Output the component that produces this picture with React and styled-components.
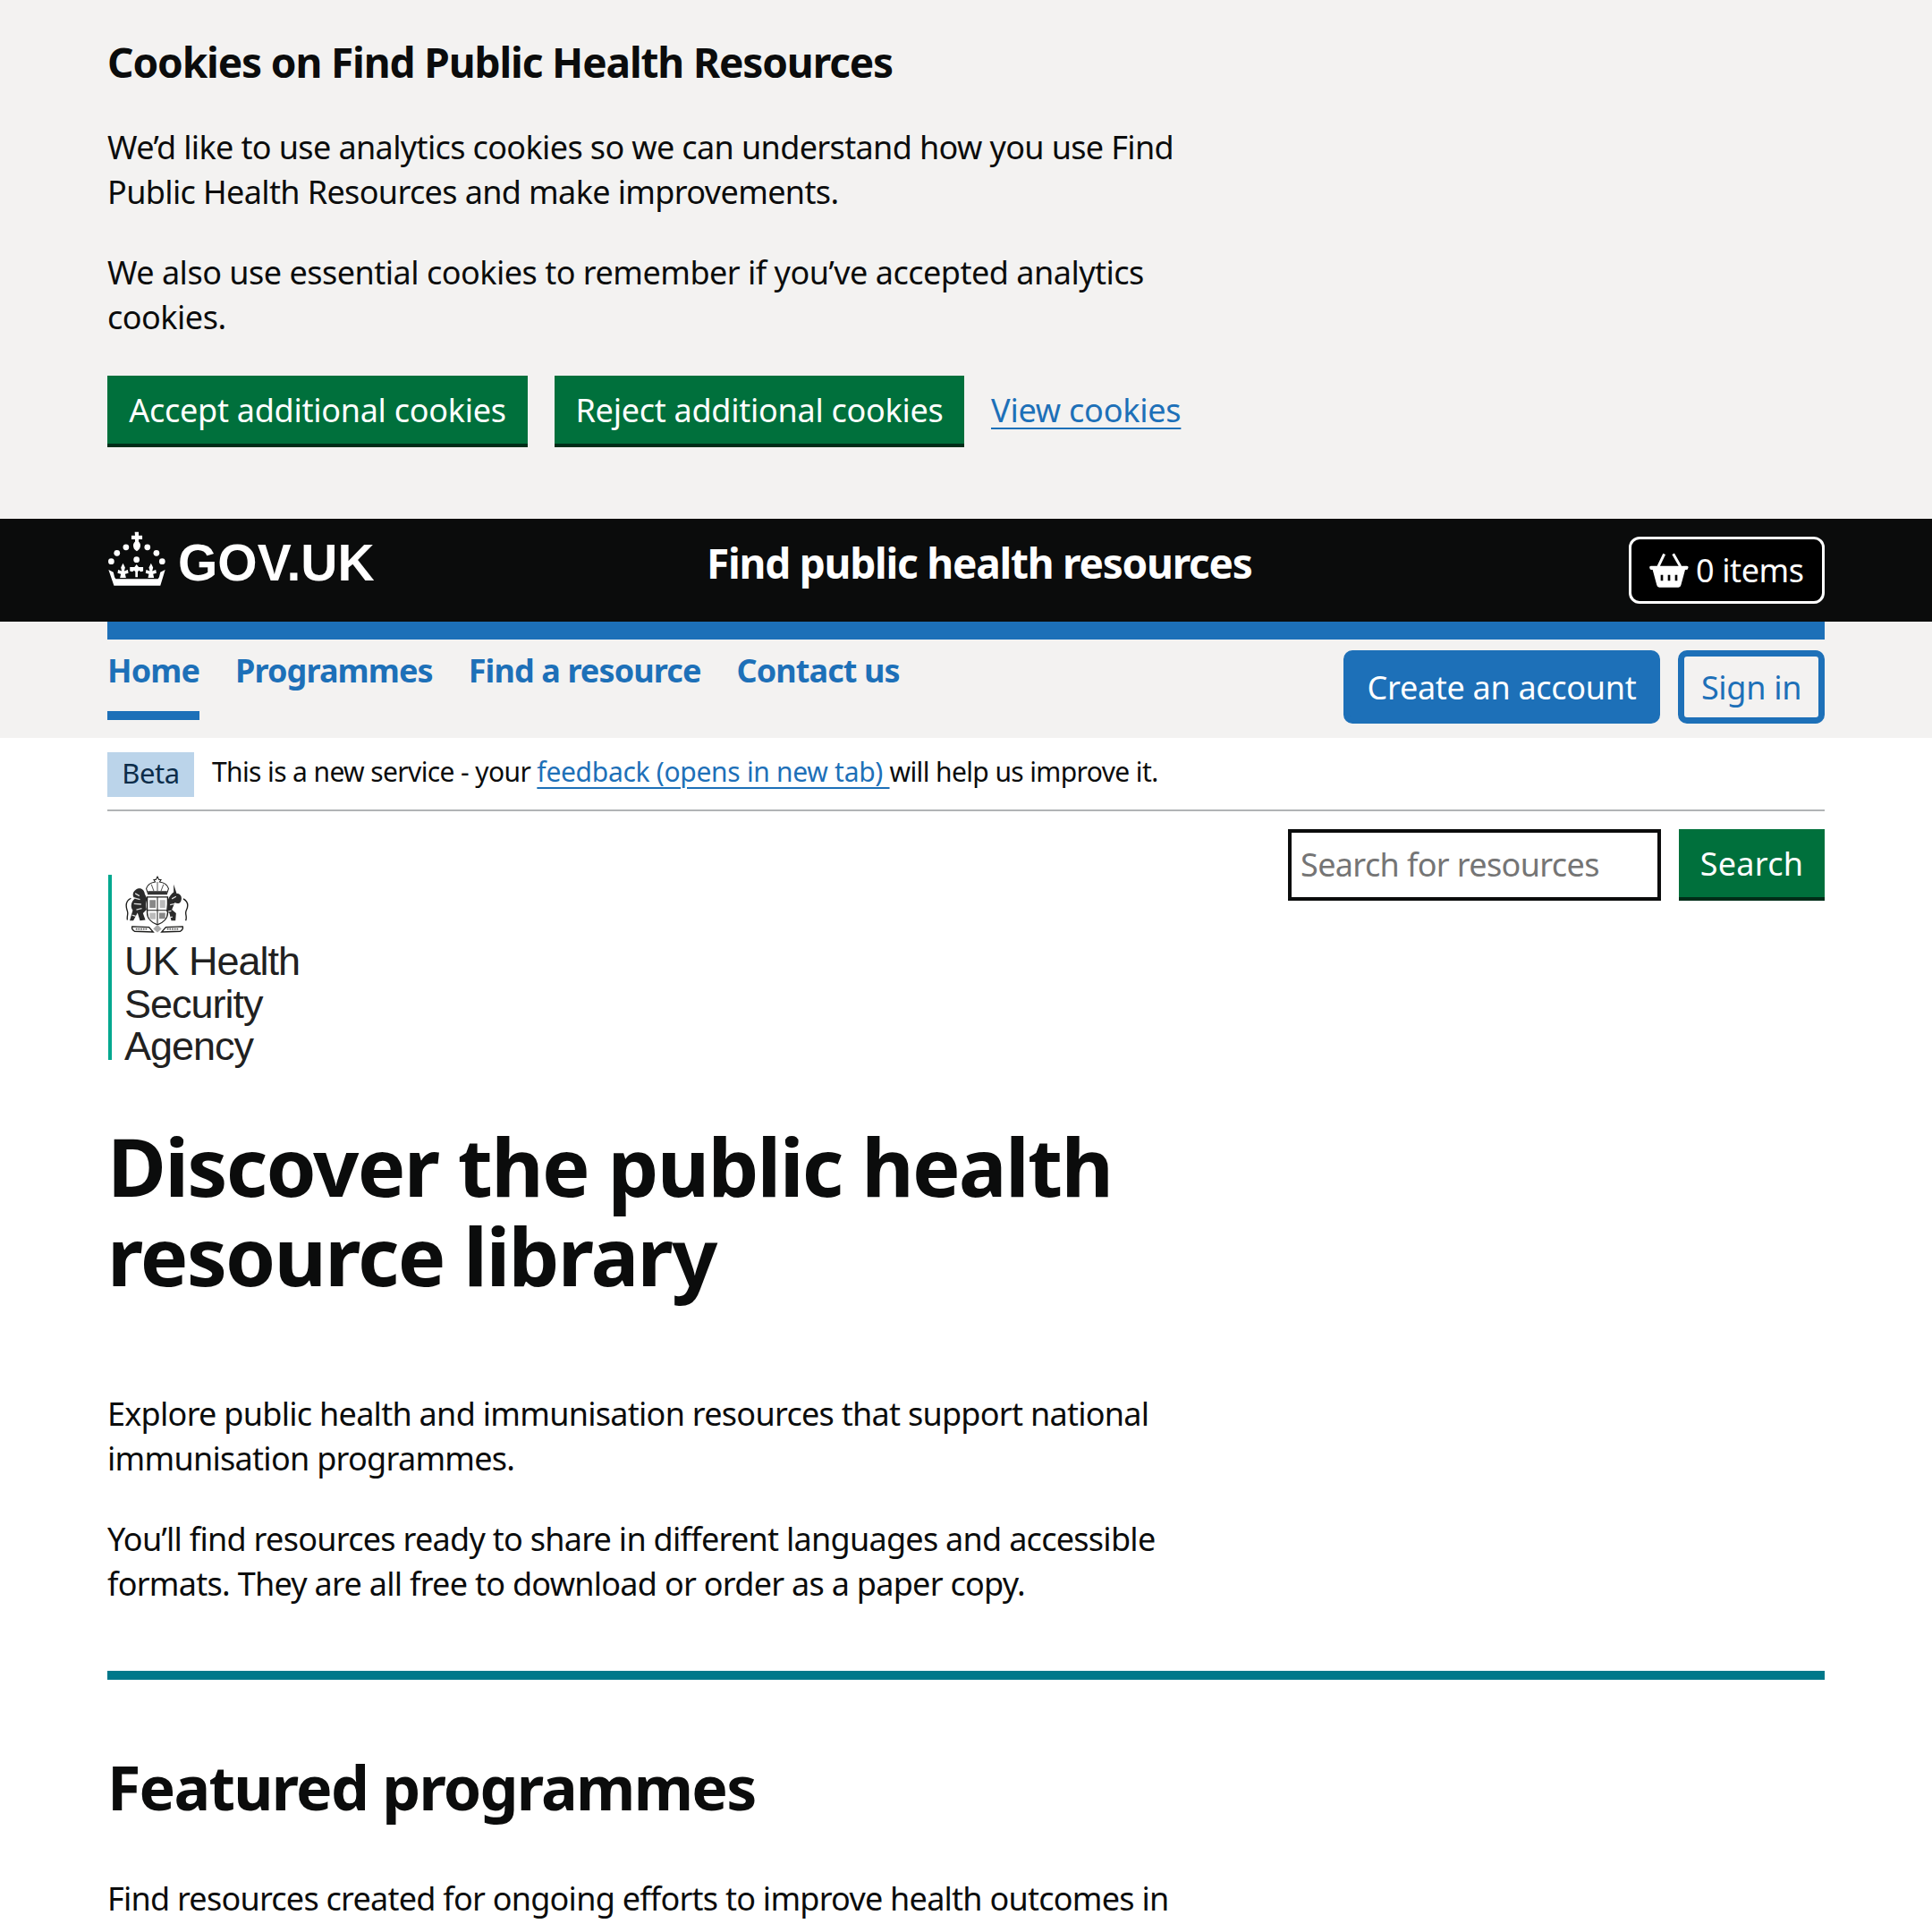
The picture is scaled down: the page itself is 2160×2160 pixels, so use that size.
import React from 'react';
import styled, { createGlobalStyle } from 'styled-components';

const GlobalStyle = createGlobalStyle`
  html, body {
    margin: 0;
    padding: 0;
    background: #fff;
    color: #0b0c0c;
    font-family: "Noto Sans", "Open Sans", sans-serif;
  }
  body {
    height: 2160px;
    overflow: hidden;
  }
  * {
    box-sizing: border-box;
  }
`;

const Container = styled.div`
  margin: 0 120px;
`;

const CookieBanner = styled.section`
  height: 580px;
  padding-top: 39px;
  background: #f3f2f1;
`;

const CookieTitle = styled.h2`
  margin: 0 0 41px;
  font-size: 46px;
  line-height: 60px;
  font-weight: 700;
  letter-spacing: -1.13px;
`;

const BodyText = styled.p`
  width: 1280px;
  margin: 0 0 40px;
  font-size: 36px;
  line-height: 50px;
  letter-spacing: ${(props) => props.$spacing ?? -0.63}px;
`;

const ButtonRow = styled.div`
  display: flex;
  align-items: flex-start;
  gap: 30px;
`;

const GreenButton = styled.button`
  width: ${(props) => props.$width}px;
  height: 76px;
  padding: 0;
  border: 0;
  background: #00703c;
  box-shadow: 0 4px 0 #002d18;
  color: #fff;
  font: inherit;
  font-size: 36px;
  letter-spacing: ${(props) => props.$spacing ?? -0.27}px;
`;

const Link = styled.a`
  color: #1d70b8;
  text-decoration: underline;
  text-decoration-thickness: 2px;
  text-underline-offset: 6px;
`;

const CookieLink = styled(Link)`
  font-size: 36px;
  line-height: 78px;
  letter-spacing: -0.22px;
`;

const Header = styled.header`
  display: grid;
  grid-template-columns: 670px 1fr auto;
  height: 115px;
  padding: 0 120px;
  background: #0b0c0c;
  color: #fff;
`;

const LogoLink = styled.div`
  display: flex;
  align-items: flex-start;
  gap: 13px;
  padding-top: 14px;
`;

const GovText = styled.span`
  margin-top: 2px;
  font-family: "Liberation Sans", Arial, sans-serif;
  font-size: 57px;
  line-height: 66px;
  font-weight: 700;
`;

const ServiceName = styled.div`
  padding-top: 19px;
  font-size: 46px;
  line-height: 60px;
  font-weight: 700;
  letter-spacing: -1.24px;
`;

const Basket = styled.div`
  display: flex;
  align-items: center;
  gap: 8px;
  width: 219px;
  height: 75px;
  margin-top: 20px;
  padding-left: 20px;
  border: 3px solid #fff;
  border-radius: 12px;
  background: #000;
  font-size: 36px;
  letter-spacing: -0.4px;
`;

const NavBand = styled.div`
  height: 130px;
  background: #f3f2f1;
`;

const NavInner = styled(Container)`
  display: flex;
  justify-content: space-between;
  height: 130px;
  border-top: 20px solid #1d70b8;
`;

const NavList = styled.nav`
  display: flex;
  gap: 40px;
`;

const NavItem = styled.a`
  height: 90px;
  padding-top: 10px;
  border-bottom: 10px solid ${(props) => (props.$active ? '#1d70b8' : 'transparent')};
  color: #1d70b8;
  font-size: 36px;
  line-height: 50px;
  font-weight: 700;
  letter-spacing: -0.9px;
`;

const AuthButtons = styled.div`
  display: flex;
  gap: 20px;
  margin-top: 12px;
`;

const AuthButton = styled.a`
  display: flex;
  align-items: center;
  justify-content: center;
  width: ${(props) => props.$width}px;
  height: 82px;
  border: 7px solid #1d70b8;
  border-radius: 10px;
  background: ${(props) => (props.$filled ? '#1d70b8' : 'transparent')};
  color: ${(props) => (props.$filled ? '#fff' : '#1d70b8')};
  font-size: 36px;
  letter-spacing: -0.3px;
`;

const PhaseBanner = styled.div`
  display: flex;
  align-items: flex-start;
  gap: 20px;
  height: 82px;
  padding-top: 16px;
  border-bottom: 2px solid #b1b4b6;
  font-size: 30px;
  line-height: 44px;
  letter-spacing: -0.62px;
`;

const Tag = styled.strong`
  width: 97px;
  height: 50px;
  background: #bbd4ea;
  color: #0c2d4a;
  font-size: 31px;
  font-weight: 400;
  line-height: 47px;
  letter-spacing: -0.4px;
  text-align: center;
`;

const PhaseLink = styled(Link)`
  letter-spacing: -0.3px;
`;

const SearchForm = styled.form`
  display: flex;
  justify-content: flex-end;
  gap: 20px;
  margin: 20px 0 -29px;
`;

const SearchInput = styled.input`
  width: 417px;
  height: 80px;
  padding: 0 10px 2px;
  border: 4px solid #0b0c0c;
  border-radius: 0;
  font: inherit;
  font-size: 36px;
  letter-spacing: -0.63px;
  &::placeholder {
    color: #757575;
    opacity: 1;
  }
`;

const OrgLogo = styled.div`
  height: 207px;
  margin-left: 1px;
  padding-left: 14px;
  border-left: 4px solid #00a88f;
`;

const OrgName = styled.div`
  margin-top: 2px;
  font-family: "Liberation Sans", Arial, sans-serif;
  font-size: 45px;
  line-height: 47.5px;
  letter-spacing: -1px;
  color: #212121;
`;

const PageTitle = styled.h1`
  width: 1280px;
  margin: 68px 0 103px;
  font-size: 90px;
  line-height: 100px;
  font-weight: 700;
  letter-spacing: -1.75px;
`;

const Rule = styled.hr`
  height: 10px;
  margin: 72px 0 80px;
  border: 0;
  background: #00788a;
`;

const SectionTitle = styled.h2`
  margin: 0 0 60px;
  font-size: 68px;
  line-height: 80px;
  font-weight: 700;
  letter-spacing: -1.72px;
`;

const CrownIcon = () => (
  <svg width="66" height="62" viewBox="58 40 196 184" fill="#fff" aria-hidden="true">
    <path d="M149 42h13v12h12v13h-12v7c6 5 7 12 5 19-2 6-5 10-11 13-6-3-10-7-11-13-2-7-1-14 5-19v-7h-12V54h12z" />
    <circle cx="120" cy="93" r="10" />
    <circle cx="191" cy="93" r="10" />
    <circle cx="90" cy="112" r="10" />
    <circle cx="221" cy="112" r="10" />
    <circle cx="71" cy="140" r="10" />
    <circle cx="240" cy="140" r="10" />
    <circle cx="155" cy="134" r="10" />
    <path d="M110 146l7 14-3 12 12-4 2 11-11 3 3 12h-20l3-12-11-3 2-11 12 4-3-12z" />
    <path d="M155 150l7 9h15v13l-8 2-6-4-4 4v18h-8v-18l-4-4-6 4-8-2v-13h15z" />
    <path d="M203 146l7 14-3 12 12-4 2 11-11 3 3 12h-20l3-12-11-3 2-11 12 4-3-12z" />
    <path d="M62 168l16 8 4 16 4 6h140l4-6 4-16 16-8-16 52H80z" />
  </svg>
);

const BasketIcon = () => (
  <svg width="44" height="40" viewBox="190 86 132 116" aria-hidden="true">
    <path d="M240 88l-20 42M270 88l24 42" stroke="#fff" strokeWidth="9" fill="none" />
    <path d="M196 128h120a5 5 0 0 1 4 7 6 6 0 0 1-6 6h-4l-14 52a9 9 0 0 1-9 7h-63a9 9 0 0 1-9-7l-14-52h-4a6 6 0 0 1-6-6 5 5 0 0 1 5-7z" fill="#fff" />
    <path d="M232 158v20M256 158v20M280 158v20" stroke="#000" strokeWidth="8" />
  </svg>
);

const Crest = () => (
  <svg width="74" height="66" viewBox="90 50 220 196" aria-hidden="true">
    <path d="M200 56l5 10 7 0-5 8c15 2 26 10 30 22l-6 18h-62l-6-18c4-12 15-20 30-22l-5-8 7 0z" fill="none" stroke="#1d1d1b" strokeWidth="3" />
    <path d="M200 74v30M180 82l8 22M220 82l-8 22" stroke="#555" strokeWidth="3" />
    <path d="M168 104h64v12h-64z" fill="#333" />
    <path d="M166 124h68v52c0 20-16 34-34 40-18-6-34-20-34-40z" fill="#fff" stroke="#1d1d1b" strokeWidth="4" />
    <path d="M200 124v90M166 168h68" stroke="#1d1d1b" strokeWidth="3" />
    <path d="M174 134h20v26h-20zM206 176h20v20h-20z" fill="#888" />
    <path d="M208 134h18v26h-18zM174 176h20v22h-20z" fill="#bbb" />
    <path d="M128 100c14-10 28-2 30 14l8 16c-4 10-6 22-2 36l-12 12 8 22-18 2-8-26-14 26h-12l10-34c-10-14-4-30 8-40-10-4-10-20 2-28z" fill="#2a2a2a" />
    <path d="M126 112l14 8M120 126l22 6M122 146l24 2M130 166l18-4M116 184l12 4" stroke="#ddd" strokeWidth="4" />
    <path d="M112 128c-12 6-20 20-12 42 4 12-2 14 0 30" fill="none" stroke="#1d1d1b" strokeWidth="4" />
    <path d="M254 82l10 30c12 0 20 10 14 26-6 10-14 8-20 4l-10 24 14 12-2 24-14 0-6-24-10-6 4-36c6-16 14-24 20-28z" fill="#2a2a2a" />
    <path d="M262 122l-14 8M258 146l-16 4M246 170l-10 2M250 190l-10 2" stroke="#ddd" strokeWidth="4" />
    <path d="M286 130c14 8 18 22 10 38-6 12 4 20-2 34" fill="none" stroke="#1d1d1b" strokeWidth="4" />
    <path d="M116 222l56 2 14 16-62-2c-6-4-10-10-8-16zM284 222l-56 2-14 16 62-2c6-4 10-10 8-16z" fill="#fff" stroke="#1d1d1b" strokeWidth="4" />
    <path d="M128 230h40M232 230h40" stroke="#555" strokeWidth="5" strokeDasharray="5 3" />
    <path d="M200 216l14 14-14 12-14-12z" fill="#aaa" />
  </svg>
);

const App = () => (
  <>
    <GlobalStyle />
    <CookieBanner>
      <Container>
        <CookieTitle>Cookies on Find Public Health Resources</CookieTitle>
        <BodyText>
          We’d like to use analytics cookies so we can understand how you use Find Public Health
          Resources and make improvements.
        </BodyText>
        <BodyText $spacing={-0.5}>
          We also use essential cookies to remember if you’ve accepted analytics cookies.
        </BodyText>
        <ButtonRow>
          <GreenButton $width={470}>Accept additional cookies</GreenButton>
          <GreenButton $width={458}>Reject additional cookies</GreenButton>
          <CookieLink href="#">View cookies</CookieLink>
        </ButtonRow>
      </Container>
    </CookieBanner>
    <Header>
      <LogoLink>
        <CrownIcon />
        <GovText>GOV.UK</GovText>
      </LogoLink>
      <ServiceName>Find public health resources</ServiceName>
      <Basket>
        <BasketIcon />
        0 items
      </Basket>
    </Header>
    <NavBand>
      <NavInner>
        <NavList>
          <NavItem $active>Home</NavItem>
          <NavItem>Programmes</NavItem>
          <NavItem>Find a resource</NavItem>
          <NavItem>Contact us</NavItem>
        </NavList>
        <AuthButtons>
          <AuthButton $filled $width={354}>Create an account</AuthButton>
          <AuthButton $width={164}>Sign in</AuthButton>
        </AuthButtons>
      </NavInner>
    </NavBand>
    <Container>
      <PhaseBanner>
        <Tag>Beta</Tag>
        <span>
          This is a new service - your <PhaseLink href="#">feedback (opens in new tab) </PhaseLink>
          will help us improve it.
        </span>
      </PhaseBanner>
      <SearchForm>
        <SearchInput placeholder="Search for resources" />
        <GreenButton type="button" $width={163} $spacing={0.3}>Search</GreenButton>
      </SearchForm>
      <OrgLogo>
        <Crest />
        <OrgName>
          UK Health<br />Security<br />Agency
        </OrgName>
      </OrgLogo>
      <PageTitle>Discover the public health resource library</PageTitle>
      <BodyText $spacing={-0.72}>
        Explore public health and immunisation resources that support national immunisation
        programmes.
      </BodyText>
      <BodyText $spacing={-0.72}>
        You’ll find resources ready to share in different languages and accessible formats. They
        are all free to download or order as a paper copy.
      </BodyText>
      <Rule />
      <SectionTitle>Featured programmes</SectionTitle>
      <BodyText $spacing={-0.75}>Find resources created for ongoing efforts to improve health outcomes in</BodyText>
    </Container>
  </>
);

export default App;
